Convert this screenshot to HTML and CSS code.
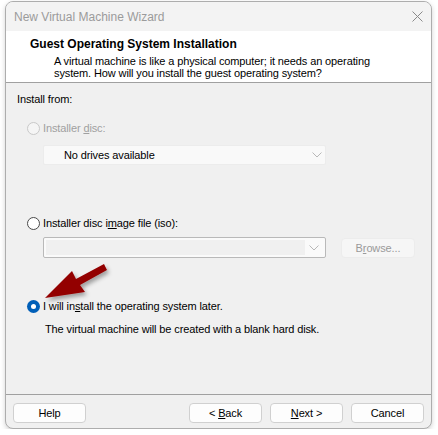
FILE: index.html
```html
<!DOCTYPE html>
<html>
<head>
<meta charset="utf-8">
<link rel="stylesheet" href="styles.css">
</head>
<body>
<div class="window">
  <div class="titlebar">
    <span class="title">New Virtual Machine Wizard</span>
    <svg class="close" width="11" height="11" viewBox="0 0 11 11"><path d="M0.5 0.5 L10.5 10.5 M10.5 0.5 L0.5 10.5" stroke="#8a8a8a" stroke-width="1" fill="none"/></svg>
  </div>
  <div class="header">
    <div class="h-title">Guest Operating System Installation</div>
    <div class="h-desc">A virtual machine is like a physical computer; it needs an operating<br>system. How will you install the guest operating system?</div>
  </div>
  <div class="content">
    <div class="label">Install from:</div>
    <div class="row row-disc disabled"><span class="radio radio-dis"></span><span>Installer <u>d</u>isc:</span></div>
    <div class="select select-dis">
      <span class="select-text">No drives available</span>
      <svg class="chev" width="10" height="6" viewBox="0 0 10 6"><path d="M0.5 0.5 L5 5 L9.5 0.5" stroke="#b8b8b8" fill="none"/></svg>
    </div>
    <div class="row row-iso"><span class="radio"></span><span>Installer disc i<u>m</u>age file (iso):</span></div>
    <div class="iso-line">
      <div class="combo">
        <div class="combo-field"></div>
        <div class="combo-btn"><svg width="10" height="6" viewBox="0 0 10 6"><path d="M0.5 0.5 L5 5 L9.5 0.5" stroke="#b8b8b8" fill="none"/></svg></div>
      </div>
      <div class="btn btn-dis"><span>B<u>r</u>owse...</span></div>
    </div>
    <div class="row row-later"><span class="radio radio-on"></span><span>I will in<u>s</u>tall the operating system later.</span></div>
    <div class="note">The virtual machine will be created with a blank hard disk.</div>
  </div>
  <div class="footer">
    <div class="btn"><span>Help</span></div>
    <div class="spacer"></div>
    <div class="btn"><span>&lt; <u>B</u>ack</span></div>
    <div class="btn"><span><u>N</u>ext &gt;</span></div>
    <div class="btn"><span>Cancel</span></div>
  </div>
  <svg class="arrow" width="90" height="50" viewBox="0 0 90 50">
    <defs>
      <filter id="sh" x="-20%" y="-20%" width="150%" height="160%">
        <feDropShadow dx="2" dy="3" stdDeviation="2" flood-color="#000" flood-opacity="0.35"/>
      </filter>
    </defs>
    <polygon filter="url(#sh)" fill="#930000" points="4,40 31,13 35,21 63,6 66,12 39,27 44,34"/>
  </svg>
</div>
</body>
</html>
```
FILE: styles.css
```css
* { box-sizing: border-box; }
html, body { margin: 0; padding: 0; background: #ffffff; }
body {
  font-family: "Segoe UI", "Liberation Sans", Arial, sans-serif;
  font-size: 11px;
  letter-spacing: -0.12px;
  color: #000;
}
.window {
  position: relative;
  margin: 1px 0 0 5px;
  width: 427px;
  height: 428px;
  border: 1px solid #adadad;
  border-radius: 8px;
  overflow: hidden;
  background: #f0f0f0;
  display: flex;
  flex-direction: column;
  box-shadow: 0 2px 5px rgba(0,0,0,0.18);
}
.titlebar {
  height: 29px;
  flex: none;
  background: #f3f3f3;
  display: flex;
  align-items: center;
  padding: 0 8px 0 8px;
  font-size: 12px;
  letter-spacing: 0;
}
.title { color: #9b9b9b; flex: 1; }
.close { display: block; }
.header {
  height: 52px;
  flex: none;
  background: #fff;
  border-bottom: 1px solid #a0a0a0;
  padding: 6px 0 0 24px;
}
.h-title { font-weight: bold; font-size: 12px; letter-spacing: 0; line-height: 14px; }
.h-desc { padding-left: 24px; line-height: 12px; margin-top: 4px; }
.content {
  flex: 1;
  padding: 9px 0 0 11px;
}
.label { line-height: 14px; }
.row {
  display: flex;
  align-items: center;
  gap: 3px;
  line-height: 14px;
  margin-left: 10px;
}
.row-disc { margin-top: 15px; }
.disabled { color: #a0a0a0; }
.radio {
  width: 13px; height: 13px;
  border-radius: 50%;
  border: 1px solid #4a4a4a;
  background: #fff;
  flex: none;
  display: flex; align-items: center; justify-content: center;
}
.radio-dis { border-color: #c9c9c9; background: #f5f5f5; }
.radio-on { border: none; background: #005fb8; }
.radio-on::after {
  content: ""; width: 5px; height: 5px; border-radius: 50%; background: #fff;
}
.select {
  margin: 10px 0 0 26px;
  width: 283px; height: 20px;
  display: flex; align-items: center;
  background: #f9f9f9;
  border: 1px solid #ececec;
  border-radius: 2px;
}
.select-text { flex: 1; padding-left: 20px; }
.chev { margin-right: 3px; }
.row-iso { margin-top: 51px; }
.iso-line {
  display: flex;
  align-items: center;
  margin: 7px 0 0 26px;
  gap: 15px;
}
.combo {
  width: 283px; height: 21px;
  display: flex;
  border: 1px solid #b9b9b9;
  border-radius: 2px;
  background: #fafafa;
  padding: 2px;
}
.combo-field { flex: 1; background: #f0f0f0; }
.combo-btn { width: 18px; display: flex; align-items: center; justify-content: center; }
.btn {
  width: 73px; height: 20px;
  display: flex; align-items: center; justify-content: center;
  background: #fdfdfd;
  border: 1px solid #d0d0d0;
  border-radius: 4px;
  white-space: pre;
}
.btn-dis { width: 74px; height: 20px; background: #f6f6f6; border-color: #ececec; color: #9a9a9a; }
.row-later { margin-top: 41px; }
.note { margin: 9px 0 0 28px; line-height: 14px; }
.footer {
  height: 34px;
  flex: none;
  border-top: 1px solid #a0a0a0;
  display: flex;
  align-items: flex-start;
  gap: 8px;
  padding: 8px 7px 0 7px;
}
.spacer { flex: 1; }
.arrow { position: absolute; left: 35px; top: 256px; }
```
